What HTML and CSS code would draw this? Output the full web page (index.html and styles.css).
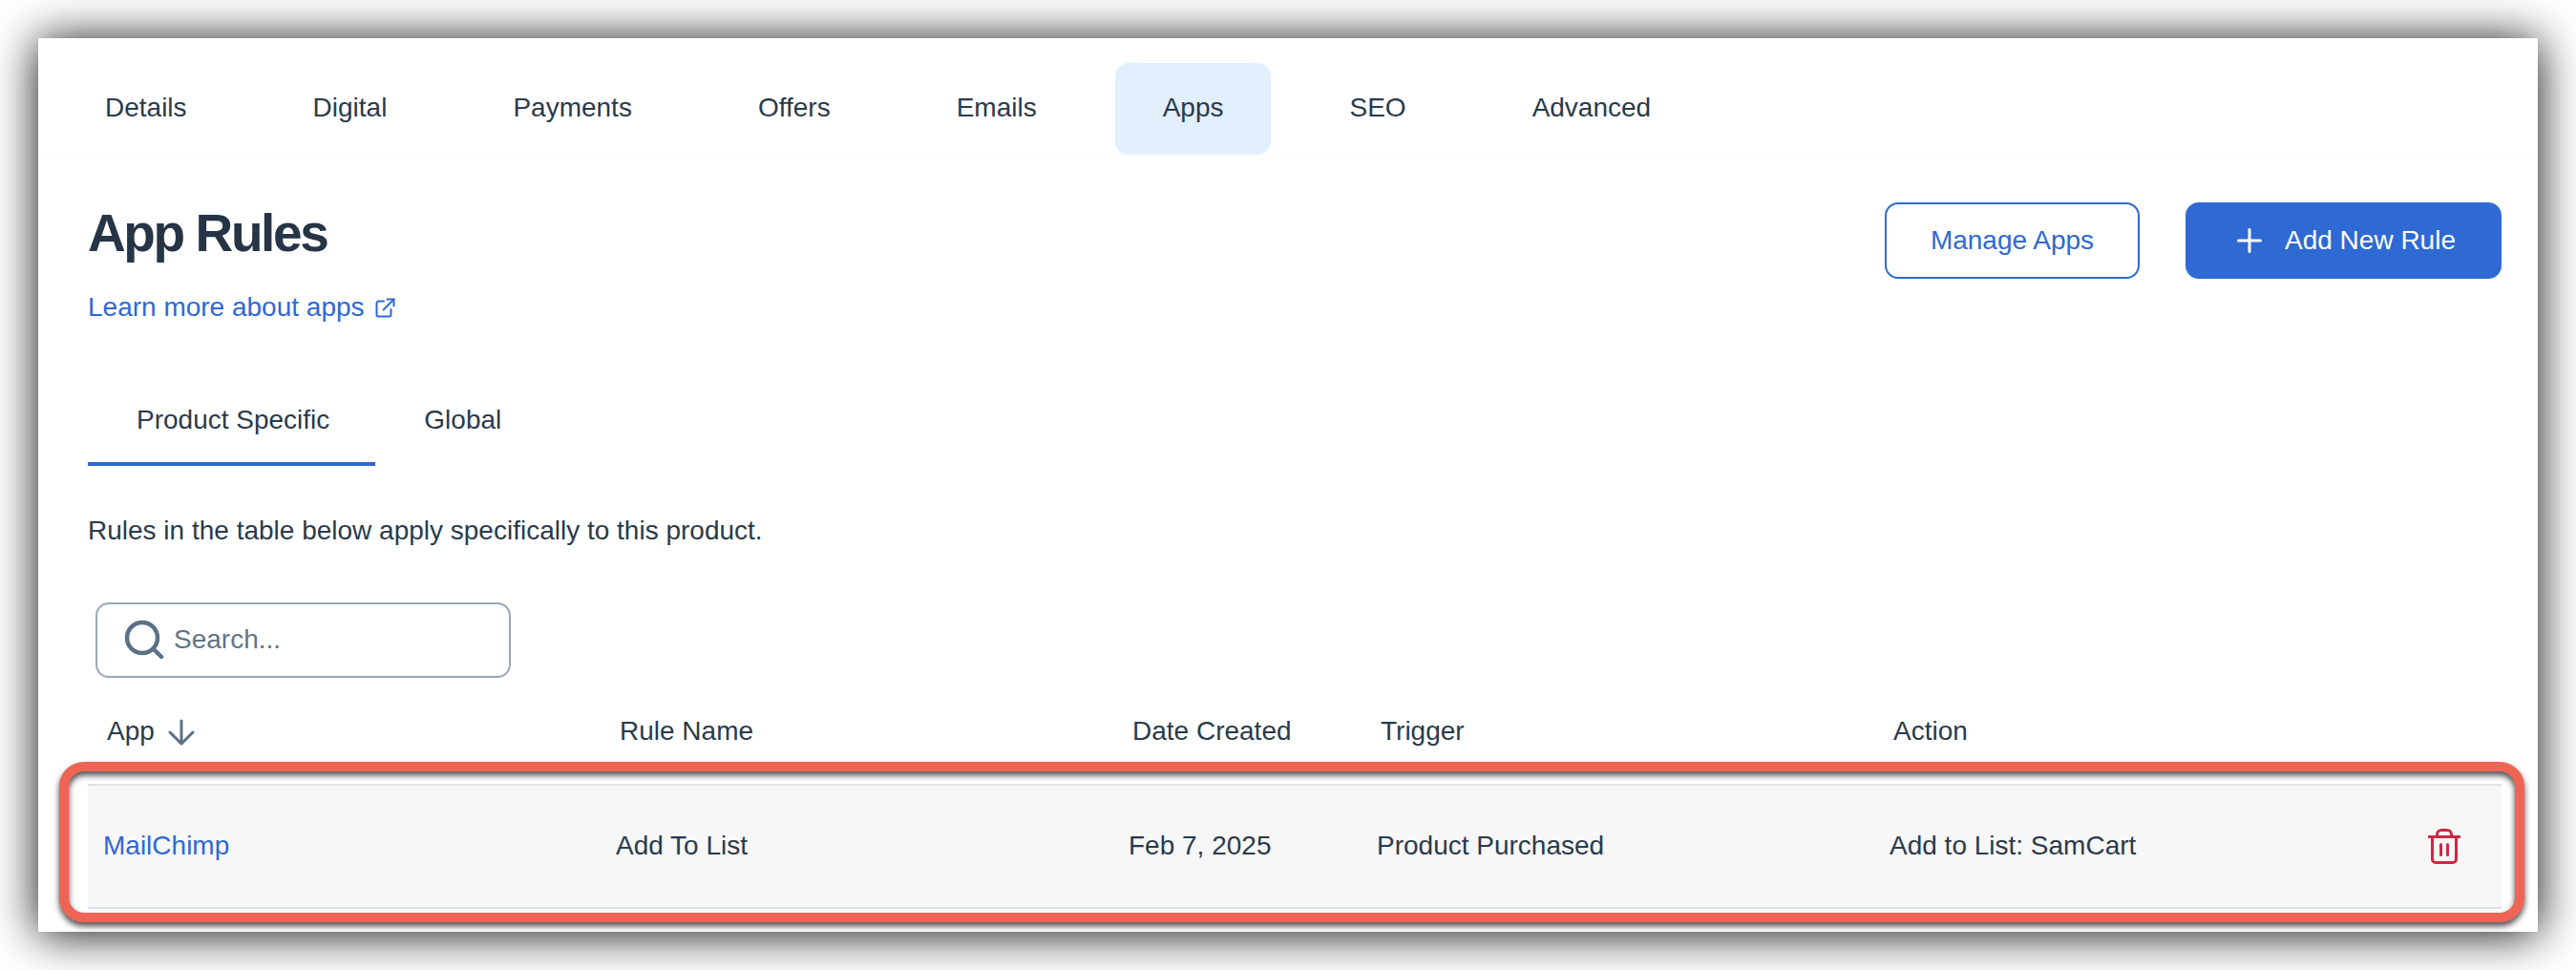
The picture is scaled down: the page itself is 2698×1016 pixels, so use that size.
FILE: index.html
```html
<!DOCTYPE html>
<html>
    <head>
        <meta charset="utf-8">
        <title>App Rules</title>
        <link rel="stylesheet" href="styles.css">
    </head>
    <body>
    <div class="card">
        <div class="nav">
            <a class="nav-item">Details</a>
            <a class="nav-item">Digital</a>
            <a class="nav-item">Payments</a>
            <a class="nav-item">Offers</a>
            <a class="nav-item">Emails</a>
            <a class="nav-item active">Apps</a>
            <a class="nav-item">SEO</a>
            <a class="nav-item">Advanced</a>
        </div>
        <div class="content">
            <div class="head">
                <div>
                    <h1>App Rules</h1>
                    <a class="learn">Learn more about apps
                        <svg width="21" height="21" viewBox="0 0 21 21" fill="none" stroke="currentColor" stroke-width="2" stroke-linecap="round" stroke-linejoin="round">
                            <path d="M9 3.5H3.5a2 2 0 0 0-2 2v12a2 2 0 0 0 2 2h11a2 2 0 0 0 2-2V12"/>
                            <path d="M12.500 1.500h7v7"/>
                            <path d="M19.500 1.500L8.500 12.500"/>
                        </svg>
                    </a>
                </div>
                <div class="actions">
                    <button class="btn outline">Manage Apps</button>
                    <button class="btn solid">
                        <svg width="26" height="26" viewBox="0 0 26 26" fill="none" stroke="currentColor" stroke-width="3" stroke-linecap="round">
                            <path d="M13 1.500v23M1.500 13h23"/>
                        </svg>
                        Add New Rule
                    </button>
                </div>
            </div>
            <div class="subtabs">
                <a class="subtab active">Product Specific</a>
                <a class="subtab">Global</a>
            </div>
            <p class="note">Rules in the table below apply specifically to this product.</p>
            <div class="search">
                <svg width="42" height="42" viewBox="0 0 42 42" fill="none" stroke="#5b7086" stroke-width="4.500" stroke-linecap="round">
                    <circle cx="19" cy="19" r="16"/>
                    <path d="M31 31l8 8"/>
                </svg>
                <span>Search...</span>
            </div>
            <table class="rules">
                <thead>
                    <tr>
                        <th class="col-a">App
                            <svg class="sort" width="28" height="28" viewBox="0 0 28 28" fill="none" stroke="#5b7086" stroke-width="3" stroke-linecap="round" stroke-linejoin="round">
                                <path d="M14 2v24M2 14l12 12 12-12"/>
                            </svg>
                        </th>
                        <th class="col-b">Rule Name</th>
                        <th class="col-c">Date Created</th>
                        <th class="col-d">Trigger</th>
                        <th>Action</th>
                    </tr>
                </thead>
                <tbody>
                    <tr>
                        <td><a class="app-link">MailChimp</a></td>
                        <td>Add To List</td>
                        <td>Feb 7, 2025</td>
                        <td>Product Purchased</td>
                        <td>
                            <div class="last">
                                <span>Add to List: SamCart</span>
                                <svg width="34" height="37" viewBox="0 0 34 37" fill="none" stroke="#cb2a3f" stroke-width="3" stroke-linecap="round" stroke-linejoin="round">
                                    <path d="M1 8.500h32"/>
                                    <path d="M4.500 8.500V32a3.500 3.500 0 0 0 3.500 3.500h18a3.500 3.500 0 0 0 3.500-3.500V8.500"/>
                                    <path d="M9.500 8.500V6a4.500 4.500 0 0 1 4.500-4.500h6a4.500 4.500 0 0 1 4.500 4.500v2.500"/>
                                    <path d="M13.500 16.500v11M20.500 16.500v11"/>
                                </svg>
                            </div>
                        </td>
                    </tr>
                </tbody>
            </table>
        </div>
        <div class="highlight"></div>
    </div>
    </body>
</html>
```

FILE: styles.css
```css
html, body{
    margin: 0;
    background: #fff;
}
body{
    padding: 40px;
    height: 1016px;
    box-sizing: border-box;
    overflow: hidden;
    font-family: "Liberation Sans", Arial, sans-serif;
    font-size: 28px;
    line-height: 40px;
    color: #2a3a4b;
}
.card{
    position: relative;
    height: 936px;
    background: #fff;
    box-shadow: 0 2px 46px rgba(0, 0, 0, 0.95);
}
.nav{
    display: flex;
    gap: 32px;
    padding: 26px 20px 0;
    border-bottom: 1px solid #fafafa;
}
.nav-item{
    padding: 0 50px;
    height: 96px;
    line-height: 94px;
    border-radius: 14px;
}
.nav-item.active{
    background: #e2f0fd;
}
.content{
    padding: 49px 38px 0 52px;
}
.head{
    display: flex;
    justify-content: space-between;
    align-items: flex-start;
}
h1{
    margin: 0;
    font-size: 55px;
    line-height: 64px;
    font-weight: 700;
    letter-spacing: -2.4px;
    color: #263545;
}
.learn{
    display: flex;
    align-items: center;
    gap: 11px;
    margin-top: 26px;
    color: #2f69d3;
}
.actions{
    display: flex;
    gap: 48px;
}
.btn{
    display: flex;
    align-items: center;
    justify-content: center;
    height: 80px;
    box-sizing: border-box;
    font: inherit;
    border-radius: 14px;
    border: 2px solid #2f69d3;
}
.btn.outline{
    width: 267px;
    background: #fff;
    color: #2f69d3;
}
.btn.solid{
    width: 331px;
    gap: 24px;
    padding: 0 0 0 6px;
    background: #2f69d3;
    color: #fff;
}
.subtabs{
    display: flex;
    margin-top: 50px;
}
.subtab{
    padding: 28px 48px 24px 51px;
    border-bottom: 4px solid transparent;
}
.subtab.active{
    border-bottom-color: #2f69d3;
}
.note{
    margin: 48px 0 1px;
}
.search{
    display: flex;
    align-items: center;
    gap: 10px;
    margin: 55px 0 0 8px;
    padding: 0 0 1px 28px;
    width: 435px;
    height: 79px;
    box-sizing: border-box;
    border: 2px solid #9aa8b8;
    border-radius: 14px;
    color: #5f7488;
}
.rules{
    width: 2528px;
    margin-top: 36px;
    border-collapse: collapse;
    table-layout: fixed;
}
.rules th{
    box-sizing: border-box;
    padding: 0 0 35px 20px;
    font-weight: 400;
    text-align: left;
}
.rules td{
    height: 126px;
    padding: 0 0 1px 16px;
    background: #f7f7f7;
    border-top: 2px solid #dee3e8;
    border-bottom: 2px solid #dee3e8;
}
.col-a, .col-b, .col-d{
    width: 537px;
}
.col-c{
    width: 260px;
}
.sort{
    margin-left: 6px;
    vertical-align: -6px;
}
.app-link{
    color: #2f69d3;
}
.last{
    display: flex;
    justify-content: space-between;
    align-items: center;
    padding-right: 43px;
}
.highlight{
    position: absolute;
    left: 22px;
    top: 758px;
    width: 2582px;
    height: 168px;
    box-sizing: border-box;
    border: 10px solid #ee6555;
    border-radius: 26px;
    filter: drop-shadow(0 4px 3px rgba(0, 0, 0, 0.7));
}
```
